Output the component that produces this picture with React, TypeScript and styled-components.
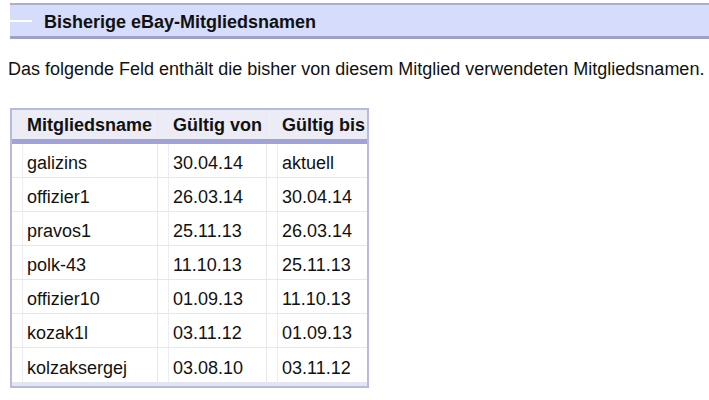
import React from 'react';
import styled, { createGlobalStyle } from 'styled-components';

interface NameEntry {
    name: string;
    from: string;
    until: string;
}

const entries: NameEntry[] = [
    { name: 'galizins', from: '30.04.14', until: 'aktuell' },
    { name: 'offizier1', from: '26.03.14', until: '30.04.14' },
    { name: 'pravos1', from: '25.11.13', until: '26.03.14' },
    { name: 'polk-43', from: '11.10.13', until: '25.11.13' },
    { name: 'offizier10', from: '01.09.13', until: '11.10.13' },
    { name: 'kozak1l', from: '03.11.12', until: '01.09.13' },
    { name: 'kolzaksergej', from: '03.08.10', until: '03.11.12' }
];

const columns = [146, 109, 100];

const App = () => {
    return (
        <>
            <GlobalStyle />
            <Page>
                <SectionHeader>
                    <Dash />
                    <SectionTitle>Bisherige eBay-Mitgliedsnamen</SectionTitle>
                </SectionHeader>
                <Intro>Das folgende Feld enthält die bisher von diesem Mitglied verwendeten Mitgliedsnamen.</Intro>
                <TableBox>
                    <HeadRow>
                        <Cell $width={columns[0]}><CellInner $offset={2}>Mitgliedsname</CellInner></Cell>
                        <Cell $width={columns[1]}><CellInner $offset={2}>Gültig von</CellInner></Cell>
                        <Cell $width={columns[2]} $last><CellInner $offset={2}>Gültig bis</CellInner></Cell>
                    </HeadRow>
                    <HeadBar />
                    {entries.map((entry) => (
                        <BodyRow key={entry.name}>
                            <Cell $width={columns[0]}><CellInner $offset={6}>{entry.name}</CellInner></Cell>
                            <Cell $width={columns[1]}><CellInner $offset={6}>{entry.from}</CellInner></Cell>
                            <Cell $width={columns[2]} $last><CellInner $offset={6}>{entry.until}</CellInner></Cell>
                        </BodyRow>
                    ))}
                    <FootStrip />
                </TableBox>
            </Page>
        </>
    );
};

const GlobalStyle = createGlobalStyle`
    body {
        margin: 0;
        background: #fff;
        font-family: "Liberation Sans", Arial, sans-serif;
        color: #111;
    }
`;

const Page = styled.div`
    padding-top: 3px;
    width: 709px;
    overflow: hidden;
`;

const SectionHeader = styled.div`
    display: flex;
    align-items: center;
    margin-left: 10px;
    height: 29px;
    padding-top: 2px;
    box-sizing: content-box;
    background-color: #d6dcfb;
    border-top: 2px solid #abaecd;
    border-bottom: 3px solid #9ea1c3;
`;

const Dash = styled.div`
    width: 22px;
    height: 2px;
    margin-top: -1px;
    background-color: #fff;
`;

const SectionTitle = styled.div`
    margin-left: 12px;
    font-size: 18px;
    line-height: 20px;
    font-weight: bold;
    color: #111;
`;

const Intro = styled.p`
    margin: 20px 0 0 8px;
    font-size: 18px;
    line-height: 20px;
    white-space: nowrap;
`;

const TableBox = styled.div`
    display: flex;
    flex-direction: column;
    margin: 29px 0 0 10px;
    width: 355px;
    border: 2px solid #b8badb;
    background-color: #fff;
`;

const HeadRow = styled.div`
    display: flex;
    height: 29px;
    background-color: #ececf6;
    font-weight: bold;
    font-size: 18px;
`;

const HeadBar = styled.div`
    height: 5px;
    background-color: #a1a3d8;
`;

const BodyRow = styled.div`
    display: flex;
    height: 34px;
    box-sizing: border-box;
    border-bottom: 1px solid #e6e6ec;
    font-size: 18px;

    &:nth-last-child(2) {
        border-bottom: none;
    }
`;

const Cell = styled.div<{ $width: number; $last?: boolean }>`
    display: flex;
    width: ${(p) => p.$width}px;
    box-sizing: border-box;
    padding-left: 10px;
    border-right: ${(p) => (p.$last ? 'none' : '1px solid #e8e8ee')};
`;

const CellInner = styled.div<{ $offset: number }>`
    display: flex;
    align-items: center;
    flex: 1;
    box-sizing: border-box;
    padding: ${(p) => p.$offset}px 0 0 4px;
    border-left: 1px solid #ececf1;
    white-space: nowrap;
`;

const FootStrip = styled.div`
    height: 4px;
    background-color: #e4e5f4;
`;

export default App;
